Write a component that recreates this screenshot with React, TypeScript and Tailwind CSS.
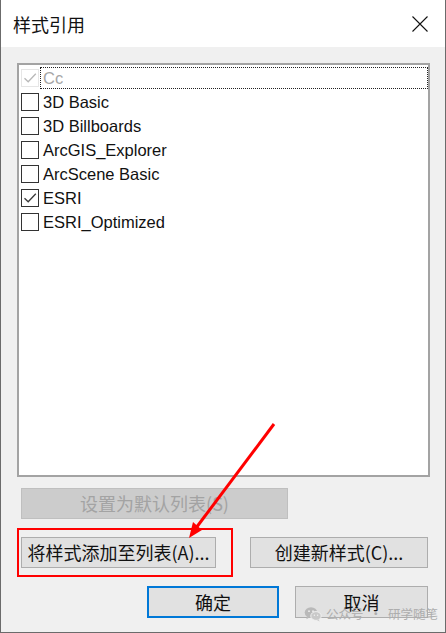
import React from "react";

const CJK = { fontFamily: '"Noto Sans CJK SC", "Liberation Sans", sans-serif' };
const LAT = { fontFamily: '"Liberation Sans", "Noto Sans CJK SC", sans-serif' };

function Check({ color }: { color: string }) {
  return (
    <svg width="16" height="16" viewBox="0 0 16 16" className="block">
      <path d="M2.5 8.2 L6.2 11.8 L13.8 3.8" fill="none" stroke={color} strokeWidth="1.3" />
    </svg>
  );
}

function Row({
  label,
  checked = false,
  disabled = false,
  focused = false,
}: {
  label: string;
  checked?: boolean;
  disabled?: boolean;
  focused?: boolean;
}) {
  return (
    <div className="flex h-[24px] items-center pl-[2px]">
      <div
        className={
          "flex h-[18px] w-[18px] shrink-0 items-center justify-center bg-white " +
          (disabled ? "border border-[#e6e6e6]" : "border-[1.5px] border-[#333333]")
        }
      >
        {checked ? <Check color={disabled ? "#b8b8b8" : "#3a3a3a"} /> : null}
      </div>
      <div
        className={
          "ml-[1px] flex h-[22px] flex-1 items-center pl-[2px] text-[16.5px] " +
          (focused ? "border border-dotted border-[#222222] " : "border border-transparent ") +
          (disabled ? "text-[#a6a6a6]" : "text-[#111111]")
        }
        style={LAT}
      >
        {label}
      </div>
    </div>
  );
}

function WeChatIcon() {
  return (
    <svg width="18" height="16" viewBox="0 0 18 16" className="block">
      <ellipse cx="7" cy="6.5" rx="6.3" ry="5.3" fill="#b9b9b9" />
      <path d="M3 10.5 L2.4 13.2 L5.4 11.4 Z" fill="#b9b9b9" />
      <ellipse cx="12" cy="10" rx="5.2" ry="4.4" fill="#c9c9c9" stroke="#f0f0f0" strokeWidth="1" />
      <path d="M14.6 13.2 L15.6 15.4 L12.8 14 Z" fill="#c9c9c9" />
      <circle cx="5" cy="5.2" r="0.9" fill="#f0f0f0" />
      <circle cx="9" cy="5.2" r="0.9" fill="#f0f0f0" />
      <circle cx="10.4" cy="9.3" r="0.7" fill="#f0f0f0" />
      <circle cx="13.6" cy="9.3" r="0.7" fill="#f0f0f0" />
    </svg>
  );
}

export default function App() {
  return (
    <div className="relative flex h-[633px] w-[446px] flex-col overflow-hidden border-x border-b border-x-[#6b6b6b] border-b-[#6b6b6b] bg-[#f0f0f0]">
      {/* title bar */}
      <div className="flex h-[47px] shrink-0 items-center justify-between bg-white pl-[12px] pr-[17px]">
        <span className="text-[18px] leading-none text-[#111111]" style={CJK}>
          样式引用
        </span>
        <svg width="16" height="16" viewBox="0 0 16 16" className="block">
          <path d="M0.5 0.5 L15.5 15.5 M15.5 0.5 L0.5 15.5" stroke="#111111" strokeWidth="1.1" />
        </svg>
      </div>

      {/* body */}
      <div className="flex flex-1 flex-col pl-[16px] pt-[16px]">
        <div className="h-[414px] w-[413px] border-2 border-[#a3a3a3] bg-white pt-[1px]">
          <Row label="Cc" checked disabled focused />
          <Row label="3D Basic" />
          <Row label="3D Billboards" />
          <Row label="ArcGIS_Explorer" />
          <Row label="ArcScene Basic" />
          <Row label="ESRI" checked />
          <Row label="ESRI_Optimized" />
        </div>

        <div className="ml-[4px] mt-[11px] flex h-[31px] w-[267px] items-center justify-center border border-[#bfbfbf] bg-[#cccccc] text-[18px] text-[#a3a3a3]" style={CJK}>
          设置为默认列表(S)
        </div>

        <div className="mt-[18px] flex">
          <div className="ml-[4px] flex h-[31px] w-[195px] items-center justify-center border border-[#adadad] bg-[#e1e1e1] text-[18px] text-[#111111]" style={CJK}>
            将样式添加至列表(A)...
          </div>
          <div className="ml-[34px] flex h-[31px] w-[178px] items-center justify-center border border-[#adadad] bg-[#e1e1e1] text-[18px] text-[#111111]" style={CJK}>
            创建新样式(C)...
          </div>
        </div>

        <div className="mt-[18px] flex">
          <div className="ml-[130px] flex h-[32px] w-[132px] items-center justify-center border-2 border-[#0078d7] bg-[#e1e1e1] text-[18px] text-[#111111]" style={CJK}>
            确定
          </div>
          <div className="ml-[16px] flex h-[32px] w-[133px] items-center justify-center border border-[#adadad] bg-[#e1e1e1] text-[18px] text-[#111111]" style={CJK}>
            取消
          </div>
        </div>
      </div>

      {/* red highlight rectangle */}
      <div className="pointer-events-none absolute left-[16px] top-[528px] h-[49px] w-[216px] border-2 border-[#ff0000]" />

      {/* red arrow */}
      <svg className="pointer-events-none absolute left-0 top-0" width="446" height="633" viewBox="0 0 446 633">
        <line x1="273" y1="424" x2="195" y2="528" stroke="#ff0000" strokeWidth="3" />
        <polygon points="188,538 201,530 192,522" fill="#ff0000" />
      </svg>

      {/* watermark */}
      <div className="pointer-events-none absolute left-[303px] top-[606px] flex items-center text-[12.5px] leading-none text-[#adadad]" style={CJK}>
        <WeChatIcon />
        <span className="ml-[4px]">公众号</span>
        <span className="mx-[6px]">·</span>
        <span>研学随笔</span>
      </div>
    </div>
  );
}
